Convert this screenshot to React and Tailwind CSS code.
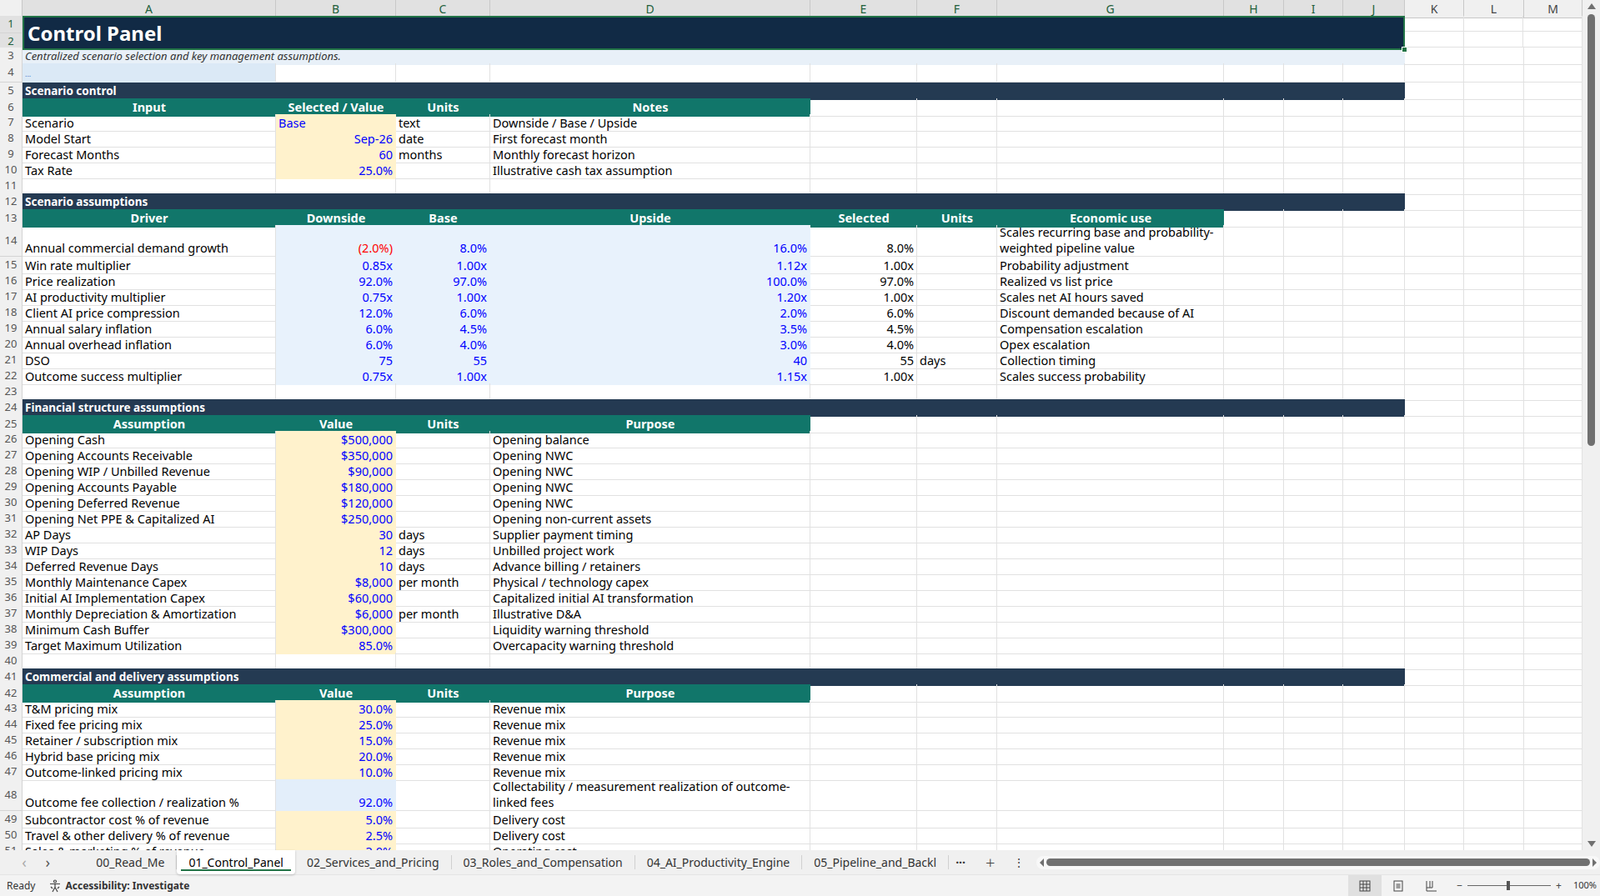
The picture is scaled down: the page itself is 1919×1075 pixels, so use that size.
import React from "react";

const GRID = "grid grid-cols-[27px_304px_144px_113px_384px_128px_96px_272px_72px_71px_74px_71px_72px_70px]";
const cellBase = "border-r border-b border-[#e1e1e1] px-[3px] flex items-end overflow-hidden leading-[19px]";

const Cell = ({ cls = "", wrap, children }) => <div className={`${cellBase} ${wrap ? "whitespace-normal" : "whitespace-nowrap"} ${cls}`}>{children}</div>;
const Blanks = ({ k }) => <>{Array.from({ length: k }).map((_, i) => <Cell key={i} />)}</>;

const RowNum = ({ n, sel }) => (
  <div className={`border-r border-b border-[#d4d4d4] flex items-center justify-center text-[13px] ${sel ? "bg-[#e1e1e1] text-[#215f3b]" : "bg-[#f0f0f0] text-[#555]"}`}>{n}</div>
);

const Row = ({ n, tall, children }) => (
  <div className={`${GRID} ${tall ? "h-[38px]" : "h-[19px]"}`}>
    <RowNum n={n} />
    {children}
  </div>
);

const Sec = ({ n, t }) => (
  <Row n={n}>
    <div className="col-span-10 bg-[#243a52] text-white font-bold text-[13.5px] px-[3px] flex items-center">{t}</div>
    <Blanks k={3} />
  </Row>
);

const Hdr = ({ n, labels, rest }) => (
  <Row n={n}>
    {labels.map((l, i) => (
      <div key={i} className="bg-[#11766a] text-white font-bold flex items-center justify-center text-[14.5px]">{l}</div>
    ))}
    <Blanks k={rest} />
  </Row>
);

const blue = "text-[#0000ff]";
const yel = "bg-[#fff2cc] border-b-[#fff2cc] border-r-[#fff2cc]";
const lb = "bg-[#e8f2fc] border-b-[#e8f2fc] border-r-[#e8f2fc]";

const ctrl = [
  [7, "Scenario", "Base", "text", "Downside / Base / Upside", true],
  [8, "Model Start", "Sep-26", "date", "First forecast month"],
  [9, "Forecast Months", "60", "months", "Monthly forecast horizon"],
  [10, "Tax Rate", "25.0%", "", "Illustrative cash tax assumption"],
];

const scen = [
  [14, "Annual commercial demand growth", "(2.0%)", "8.0%", "16.0%", "8.0%", "", "Scales recurring base and probability-weighted pipeline value"],
  [15, "Win rate multiplier", "0.85x", "1.00x", "1.12x", "1.00x", "", "Probability adjustment"],
  [16, "Price realization", "92.0%", "97.0%", "100.0%", "97.0%", "", "Realized vs list price"],
  [17, "AI productivity multiplier", "0.75x", "1.00x", "1.20x", "1.00x", "", "Scales net AI hours saved"],
  [18, "Client AI price compression", "12.0%", "6.0%", "2.0%", "6.0%", "", "Discount demanded because of AI"],
  [19, "Annual salary inflation", "6.0%", "4.5%", "3.5%", "4.5%", "", "Compensation escalation"],
  [20, "Annual overhead inflation", "6.0%", "4.0%", "3.0%", "4.0%", "", "Opex escalation"],
  [21, "DSO", "75", "55", "40", "55", "days", "Collection timing"],
  [22, "Outcome success multiplier", "0.75x", "1.00x", "1.15x", "1.00x", "", "Scales success probability"],
];

const fin = [
  [26, "Opening Cash", "$500,000", "", "Opening balance"],
  [27, "Opening Accounts Receivable", "$350,000", "", "Opening NWC"],
  [28, "Opening WIP / Unbilled Revenue", "$90,000", "", "Opening NWC"],
  [29, "Opening Accounts Payable", "$180,000", "", "Opening NWC"],
  [30, "Opening Deferred Revenue", "$120,000", "", "Opening NWC"],
  [31, "Opening Net PPE & Capitalized AI", "$250,000", "", "Opening non-current assets"],
  [32, "AP Days", "30", "days", "Supplier payment timing"],
  [33, "WIP Days", "12", "days", "Unbilled project work"],
  [34, "Deferred Revenue Days", "10", "days", "Advance billing / retainers"],
  [35, "Monthly Maintenance Capex", "$8,000", "per month", "Physical / technology capex"],
  [36, "Initial AI Implementation Capex", "$60,000", "", "Capitalized initial AI transformation"],
  [37, "Monthly Depreciation & Amortization", "$6,000", "per month", "Illustrative D&A"],
  [38, "Minimum Cash Buffer", "$300,000", "", "Liquidity warning threshold"],
  [39, "Target Maximum Utilization", "85.0%", "", "Overcapacity warning threshold"],
];

const com = [
  [43, "T&M pricing mix", "30.0%", "", "Revenue mix"],
  [44, "Fixed fee pricing mix", "25.0%", "", "Revenue mix"],
  [45, "Retainer / subscription mix", "15.0%", "", "Revenue mix"],
  [46, "Hybrid base pricing mix", "20.0%", "", "Revenue mix"],
  [47, "Outcome-linked pricing mix", "10.0%", "", "Revenue mix"],
  [48, "Outcome fee collection / realization %", "92.0%", "", "Collectability / measurement realization of outcome-linked fees", true],
  [49, "Subcontractor cost % of revenue", "5.0%", "", "Delivery cost"],
  [50, "Travel & other delivery % of revenue", "2.5%", "", "Delivery cost"],
  [51, "Sales & marketing % of revenue", "3.0%", "", "Operating cost"],
];

const FourCol = ({ r }) => {
  const [n, a, b, c, d, tall] = r;
  const bcls = n === 48 ? "bg-[#e3eefa] border-b-[#e3eefa] border-r-[#e3eefa]" : yel;
  return (
    <Row n={n} tall={tall}>
      <Cell>{a}</Cell>
      <Cell cls={`${bcls} ${blue} justify-end`}>{b}</Cell>
      <Cell>{c}</Cell>
      <Cell wrap={tall}>{d}</Cell>
      <Blanks k={9} />
    </Row>
  );
};

const cols = ["A", "B", "C", "D", "E", "F", "G", "H", "I", "J", "K", "L", "M"];

function Sheet() {
  return (
    <div className="relative h-[1020px] overflow-hidden">
      <div className={`${GRID} h-[19px]`}>
        <div className="bg-[#f0f0f0] border-r border-b border-[#c8c8c8]" />
        {cols.map((c, i) => (
          <div key={c} className={`border-r border-b border-[#c8c8c8] flex items-center justify-center text-[14px] ${i < 10 ? "bg-[#e1e1e1] text-[#215f3b]" : "bg-[#f0f0f0] text-[#444]"}`}>{c}</div>
        ))}
      </div>
      <div className={`${GRID} h-[38px]`}>
        <div className="flex flex-col">
          <RowNum n={1} sel />
          <RowNum n={2} sel />
        </div>
        <div className="col-span-10 bg-[#112a45] border-2 border-[#217346] text-white font-bold text-[24px] flex items-center px-[4px] relative">
          Control Panel
          <div className="absolute -right-[5px] -bottom-[5px] w-[7px] h-[7px] bg-[#217346] border border-white" />
        </div>
        <div className="col-span-3 flex flex-col">
          <div className="h-[19px] border-b border-[#e1e1e1] grid grid-cols-3"><div className="border-r border-[#e1e1e1]" /><div className="border-r border-[#e1e1e1]" /><div className="border-r border-[#e1e1e1]" /></div>
          <div className="h-[19px] border-b border-[#e1e1e1] grid grid-cols-3"><div className="border-r border-[#e1e1e1]" /><div className="border-r border-[#e1e1e1]" /><div className="border-r border-[#e1e1e1]" /></div>
        </div>
      </div>
      <Row n={3}>
        <div className="col-span-10 bg-[#e8f0f8] italic text-[13px] text-[#333] px-[3px] flex items-center">Centralized scenario selection and key management assumptions.</div>
        <Blanks k={3} />
      </Row>
      <div className={`${GRID} h-[23px]`}>
        <RowNum n={4} />
        <Cell cls="bg-[#dbe9f6] border-b-[#dbe9f6] text-[9px] text-[#4472c4]">...</Cell>
        <Blanks k={12} />
      </div>
      <Sec n={5} t="Scenario control" />
      <Hdr n={6} labels={["Input", "Selected / Value", "Units", "Notes"]} rest={9} />
      {ctrl.map((r) => (
        <Row key={r[0]} n={r[0]}>
          <Cell>{r[1]}</Cell>
          <Cell cls={`${yel} ${blue} ${r[5] ? "justify-start" : "justify-end"}`}>{r[2]}</Cell>
          <Cell>{r[3]}</Cell>
          <Cell>{r[4]}</Cell>
          <Blanks k={9} />
        </Row>
      ))}
      <Row n={11}><Blanks k={13} /></Row>
      <Sec n={12} t="Scenario assumptions" />
      <Hdr n={13} labels={["Driver", "Downside", "Base", "Upside", "Selected", "Units", "Economic use"]} rest={6} />
      {scen.map((r) => (
        <Row key={r[0]} n={r[0]} tall={r[0] === 14}>
          <Cell>{r[1]}</Cell>
          <Cell cls={`${lb} justify-end ${r[2].startsWith("(") ? "text-[#ff0000]" : blue}`}>{r[2]}</Cell>
          <Cell cls={`${lb} ${blue} justify-end`}>{r[3]}</Cell>
          <Cell cls={`${lb} ${blue} justify-end`}>{r[4]}</Cell>
          <Cell cls="justify-end">{r[5]}</Cell>
          <Cell>{r[6]}</Cell>
          <Cell wrap={r[0] === 14}>{r[7]}</Cell>
          <Blanks k={6} />
        </Row>
      ))}
      <Row n={23}><Blanks k={13} /></Row>
      <Sec n={24} t="Financial structure assumptions" />
      <Hdr n={25} labels={["Assumption", "Value", "Units", "Purpose"]} rest={9} />
      {fin.map((r) => <FourCol key={r[0]} r={r} />)}
      <Row n={40}><Blanks k={13} /></Row>
      <Sec n={41} t="Commercial and delivery assumptions" />
      <Hdr n={42} labels={["Assumption", "Value", "Units", "Purpose"]} rest={9} />
      {com.map((r) => <FourCol key={r[0]} r={r} />)}
    </div>
  );
}

const tabs = ["00_Read_Me", "01_Control_Panel", "02_Services_and_Pricing", "03_Roles_and_Compensation", "04_AI_Productivity_Engine", "05_Pipeline_and_Backl"];

export default function App() {
  return (
    <div className="w-[1919px] h-[1075px] overflow-hidden bg-white [font-family:'Liberation_Sans',Arial,sans-serif] text-[14.5px] text-black relative">
      <div className="flex">
        <div className="w-[1898px]"><Sheet /></div>
        <div className="w-[21px] h-[1020px] bg-[#f0f0f0] flex flex-col items-center pt-[4px]">
          <div className="w-0 h-0 border-l-[5px] border-r-[5px] border-b-[7px] border-l-transparent border-r-transparent border-b-[#707070]" />
          <div className="w-[9px] h-[518px] bg-[#707070] rounded-full mt-[6px]" />
          <div className="flex-1" />
          <div className="w-0 h-0 border-l-[5px] border-r-[5px] border-t-[7px] border-l-transparent border-r-transparent border-t-[#707070] mb-[4px]" />
        </div>
      </div>
      <div className="h-[30px] bg-[#f0f0f0] flex items-center text-[14px] text-[#333] border-b border-[#e4e4e4]">
        <span className="w-[30px] text-center text-[#aaa] ml-[15px] text-[18px]">‹</span>
        <span className="w-[30px] text-center text-[#555] text-[18px]">›</span>
        <div className="flex items-stretch h-full ml-[30px]">
          {tabs.map((t, i) => (
            <div key={t} className={`px-[14px] flex items-center relative ${i === 1 ? "bg-white text-black shadow-[0_1px_3px_rgba(0,0,0,0.2)] rounded-b-[4px]" : "border-r border-[#d0d0d0] my-[6px]"}`}>
              {t}
              {i === 1 && <div className="absolute left-[5px] right-[5px] bottom-[4px] h-[2px] bg-[#217346]" />}
            </div>
          ))}
          <span className="ml-[8px] flex items-center font-bold">···</span>
        </div>
        <span className="ml-[24px] text-[20px] text-[#444] font-light">+</span>
        <span className="ml-[22px] text-[#444]">⋮</span>
        <div className="ml-[14px] w-[720px] h-[16px] bg-[#f8f8f8] rounded-full flex items-center px-[4px] gap-[3px]">
          <div className="w-0 h-0 border-t-[5px] border-b-[5px] border-r-[5px] border-t-transparent border-b-transparent border-r-[#707070]" />
          <div className="flex-1 h-[9px] bg-[#707070] rounded-full" />
          <div className="w-0 h-0 border-t-[5px] border-b-[5px] border-l-[5px] border-t-transparent border-b-transparent border-l-[#707070]" />
        </div>
      </div>
      <div className="h-[25px] bg-[#f3f3f3] flex items-center text-[12px] text-[#333]">
        <span className="ml-[8px]">Ready</span>
        <svg className="ml-[16px]" width="16" height="16" viewBox="0 0 16 16" fill="none" stroke="#444" strokeWidth="1.2">
          <circle cx="8" cy="2.5" r="1.5" />
          <path d="M2 5.5h12M8 5.5v4M5 15l3-5.5 3 5.5M3 9l2 2M13 9l-2 2" />
        </svg>
        <span className="ml-[4px] font-bold">Accessibility: Investigate</span>
        <div className="flex-1" />
        <div className="w-[40px] h-full bg-[#e0e0e0] flex items-center justify-center">
          <svg width="14" height="14" viewBox="0 0 14 14" fill="none" stroke="#444"><rect x="1" y="1" width="12" height="12" /><path d="M1 5h12M1 9h12M5 1v12M9 1v12" /></svg>
        </div>
        <div className="w-[40px] flex items-center justify-center">
          <svg width="12" height="14" viewBox="0 0 12 14" fill="none" stroke="#444"><rect x="1" y="1" width="10" height="12" /><path d="M3.5 5h5M3.5 7h5M3.5 9h5" /></svg>
        </div>
        <div className="w-[40px] flex items-center justify-center">
          <svg width="14" height="14" viewBox="0 0 14 14" fill="none" stroke="#444"><path d="M1 1v12h12M1 9h7V1M5 1v8" /></svg>
        </div>
        <span className="ml-[10px] text-[#444]">−</span>
        <div className="w-[100px] h-[1px] bg-[#666] mx-[6px] relative">
          <div className="absolute left-[47px] -top-[5px] w-[4px] h-[11px] bg-[#555]" />
        </div>
        <span className="text-[#444]">+</span>
        <span className="ml-[14px] mr-[4px] text-[11px]">100%</span>
      </div>
    </div>
  );
}
